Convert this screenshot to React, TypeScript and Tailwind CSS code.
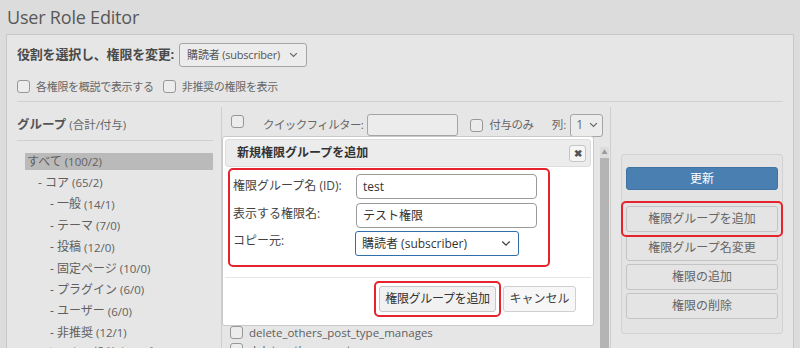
import React from 'react';

const Chevron = ({ className = '' }: { className?: string }) => (
  <svg viewBox="0 0 12 8" className={className} fill="none" stroke="currentColor" strokeWidth="1.6">
    <polyline points="1.5,1.5 6,6 10.5,1.5" />
  </svg>
);

const Box = ({ className = '' }: { className?: string }) => (
  <span className={`block w-[13px] h-[13px] shrink-0 rounded-[3px] border border-[#979797] bg-[#ececec] ${className}`} />
);

const groups: { label: string; count: string; indent: string; active?: boolean }[] = [
  { label: 'すべて', count: '(100/2)', indent: 'pl-[2px]', active: true },
  { label: '- コア', count: '(65/2)', indent: 'pl-[13px]' },
  { label: '- 一般', count: '(14/1)', indent: 'pl-[25px]' },
  { label: '- テーマ', count: '(7/0)', indent: 'pl-[25px]' },
  { label: '- 投稿', count: '(12/0)', indent: 'pl-[25px]' },
  { label: '- 固定ページ', count: '(10/0)', indent: 'pl-[25px]' },
  { label: '- プラグイン', count: '(6/0)', indent: 'pl-[25px]' },
  { label: '- ユーザー', count: '(6/0)', indent: 'pl-[25px]' },
  { label: '- 非推奨', count: '(12/1)', indent: 'pl-[25px]' },
  { label: '- カスタム投稿タイプ', count: '(29/0)', indent: 'pl-[13px]' },
];

// only the rows below the dialog are visible
const caps = ['delete_others_post_type_manages', 'delete_others_posts'];

const sideButtons = ['権限グループ名変更', '権限の追加', '権限の削除'];

export default function App() {
  return (
    <div className="relative w-[800px] h-[348px] overflow-hidden bg-[#dcdcdc] text-[#5a5a5a] font-['Open_Sans','Noto_Sans_CJK_JP',sans-serif]">
      <h1 className="h-[34px] pl-[7px] pt-[5px] text-[18px] leading-[24px] tracking-[-0.2px] text-[#585858]">User Role Editor</h1>

      <div className="ml-[6px] w-[788px] h-[314px] border-t border-x border-[#c8c8c8] bg-[#e6e6e6] px-[10px]">
        {/* role select */}
        <div className="flex items-center h-[32px] pt-[8px] whitespace-nowrap">
          <span className="text-[13px] font-bold text-[#4a4a4a] tracking-[-0.2px]">役割を選択し、権限を変更:</span>
          <div className="ml-[5px] flex items-center justify-between w-[128px] h-[24px] rounded-[3px] border border-[#a5a5a5] bg-[#ececec] pl-[7px] pr-[8px] text-[11px] tracking-[-0.2px] text-[#555]">
            <span>購読者 (subscriber)</span>
            <Chevron className="w-[9px] h-[6px] text-[#666]" />
          </div>
        </div>

        {/* options */}
        <div className="flex items-start h-[35px] pt-[13px] border-b border-[#d0d0d0] text-[11px] tracking-[-0.3px] text-[#666] whitespace-nowrap">
          <Box />
          <span className="ml-[6px] leading-[13px]">各権限を概説で表示する</span>
          <Box className="ml-[9px]" />
          <span className="ml-[6px] leading-[13px]">非推奨の権限を表示</span>
        </div>

        <div className="flex h-[247px]">
          {/* groups */}
          <div className="w-[196px] shrink-0">
            <div className="h-[39px] pt-[8px] flex items-center border-b border-[#d0d0d0] whitespace-nowrap">
              <span className="text-[12.5px] font-bold text-[#555]">グループ</span>
              <span className="ml-[3px] text-[11.5px] text-[#666]">(合計/付与)</span>
            </div>
            <ul className="mt-[10px] ml-[8px] w-[188px] text-[12px] text-[#5f5f5f]">
              {groups.map(g => (
                <li key={g.label} className="h-[21.4px] flex items-center">
                  <div className={`w-full h-[17px] flex items-center whitespace-nowrap ${g.indent} ${g.active ? 'bg-[#bababa]' : ''}`}>
                    <span>{g.label}</span>
                    <span className="ml-[3px] text-[11.5px]">{g.count}</span>
                  </div>
                </li>
              ))}
            </ul>
          </div>

          {/* capabilities */}
          <div className="ml-[8px] mt-[5px] w-[390px] shrink-0 border-x border-[#cfcfcf] flex flex-col">
            <div className="h-[36px] flex items-center pl-[9px] text-[11.5px] text-[#666] whitespace-nowrap">
              <Box className="-mt-[7px]" />
              <span className="ml-[19px] tracking-[-0.6px]">クイックフィルター:</span>
              <span className="ml-[4px] w-[91px] h-[22px] shrink-0 rounded-[3px] border border-[#a5a5a5] bg-[#ececec]" />
              <Box className="ml-[12px]" />
              <span className="ml-[6px] tracking-[-0.4px]">付与のみ</span>
              <span className="ml-[18px]">列:</span>
              <div className="ml-[4px] w-[33px] h-[23px] shrink-0 rounded-[3px] border border-[#a5a5a5] bg-[#ececec] flex items-center justify-between pl-[5px] pr-[4px] text-[12px]">
                <span>1</span>
                <Chevron className="w-[9px] h-[6px] text-[#666]" />
              </div>
            </div>
            <div className="flex flex-1 min-h-0">
              <div className="flex-1 flex flex-col justify-end pl-[8px] text-[11.5px] text-[#5f5f5f]">
                {caps.map((c, i) => (
                  <div key={c} className={`h-[17px] flex items-center ${i === caps.length - 1 ? '-mb-[9px]' : ''}`}>
                    <Box className="w-[12px] h-[12px]" />
                    <span className="ml-[6px]">{c}</span>
                  </div>
                ))}
              </div>
              <div className="w-[9px] mr-[1px] mt-[4px] flex flex-col bg-[#dcdcdc]">
                <span className="h-[11px] flex items-center justify-center text-[6px] text-[#999]">▲</span>
                <span className="flex-1 bg-[#b4b4b4]" />
              </div>
            </div>
          </div>

          {/* actions */}
          <div className="ml-[10px] mt-[52px] w-[162px] h-[180px] shrink-0 rounded-[3px] border border-[#d2d2d2] bg-[#e3e3e3] px-[4px] pt-[12px]">
            <div className="h-[23px] rounded-[3px] bg-[#4a80b1] border border-[#3f73a3] flex items-center justify-center text-[12px] text-white">更新</div>
            <div className="relative mt-[16px]">
              <div className="h-[26px] rounded-[3px] border border-[#c4c4c4] bg-[#e4e4e4] flex items-center justify-center text-[12px] text-[#666]">権限グループを追加</div>
              <span className="absolute -inset-[5px] rounded-[5px] border-2 border-[#e5242b]" />
            </div>
            {sideButtons.map(b => (
              <div key={b} className="mt-[3px] h-[26px] rounded-[3px] border border-[#c4c4c4] bg-[#e4e4e4] flex items-center justify-center text-[12px] text-[#666]">{b}</div>
            ))}
          </div>
        </div>
      </div>

      {/* modal */}
      <div className="absolute left-[222px] top-[136px] w-[372px] h-[190px] rounded-[3px] border border-[#c9c9c9] bg-white p-[2px] text-[#444]">
        <div className="h-[28px] rounded-[3px] border border-[#dddddd] bg-[#ececec] flex items-center justify-between pl-[11px] pr-[4px]">
          <span className="text-[12px] font-bold text-[#333]">新規権限グループを追加</span>
          <span className="w-[17px] h-[17px] rounded-[3px] border border-[#c5c5c5] bg-[#f6f6f6] flex items-center justify-center text-[10px] font-bold text-[#555]">✖</span>
        </div>

        <div className="ml-[3px] mt-[1px] w-[322px] h-[99px] rounded-[5px] border-2 border-[#e5242b] pl-[3px] pt-[4px] text-[12px] whitespace-nowrap">
          <div className="flex items-start h-[29px]">
            <span className="w-[123px] pt-[3px]">権限グループ名 (ID):</span>
            <div className="w-[181px] h-[25px] rounded-[4px] border border-[#9a9a9a] bg-white flex items-center pl-[6px] text-[#333]">test</div>
          </div>
          <div className="flex items-start h-[28px]">
            <span className="w-[123px] pt-[2px]">表示する権限名:</span>
            <div className="w-[181px] h-[25px] rounded-[4px] border border-[#9a9a9a] bg-white flex items-center pl-[6px] text-[#333]">テスト権限</div>
          </div>
          <div className="flex items-start">
            <span className="w-[122px] pt-[1px]">コピー元:</span>
            <div className="w-[164px] h-[25px] rounded-[3px] border border-[#2f6fab] bg-white flex items-center justify-between pl-[6px] pr-[7px] text-[#333]">
              <span>購読者 (subscriber)</span>
              <Chevron className="w-[10px] h-[7px] text-[#444]" />
            </div>
          </div>
        </div>

        <div className="mt-[10px] border-t border-[#e6e6e6] flex justify-end pr-[15px] pt-[8px] text-[12px] whitespace-nowrap">
          <div className="relative">
            <div className="w-[117px] h-[26px] rounded-[3px] border border-[#c6c6c6] bg-[#f1f1f1] flex items-center justify-center text-[#333] tracking-[-0.3px]">権限グループを追加</div>
            <span className="absolute -inset-[5px] rounded-[5px] border-2 border-[#e5242b]" />
          </div>
          <div className="ml-[7px] w-[73px] h-[26px] rounded-[3px] border border-[#d0d0d0] bg-[#f7f7f7] flex items-center justify-center text-[#444]">キャンセル</div>
        </div>
      </div>
    </div>
  );
}
